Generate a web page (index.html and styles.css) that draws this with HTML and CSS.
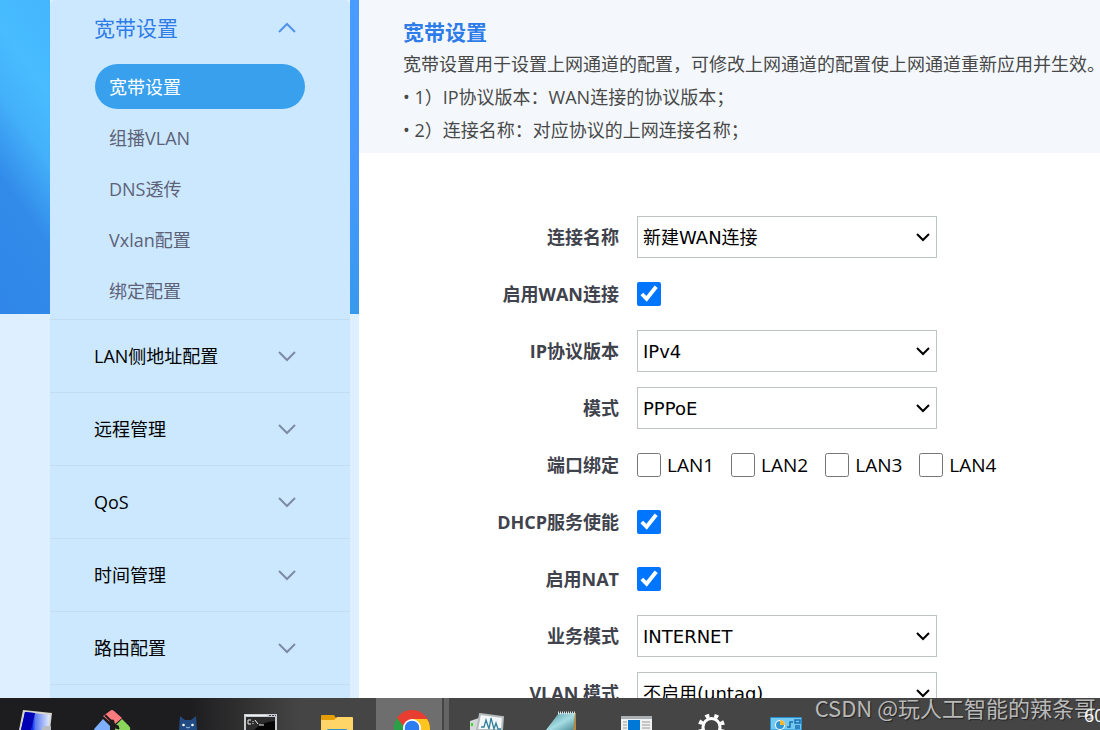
FILE: index.html
```html
<!DOCTYPE html>
<html lang="zh-CN">
<head>
<meta charset="utf-8">
<title>宽带设置</title>
<link rel="stylesheet" href="styles.css">
</head>
<body>
<svg class="defs" aria-hidden="true">
  <symbol id="chevron" viewBox="0 0 20 12"><path d="M2 2l8 8 8-8" fill="none" stroke="currentColor" stroke-width="2"/></symbol>
  <symbol id="arrow" viewBox="0 0 16 10"><path d="M2 2l6 6 6-6" fill="none" stroke="currentColor" stroke-width="2"/></symbol>
</svg>
<div class="page">
  <aside class="side">
    <nav class="menu">
      <section class="group open">
        <button class="group-title" type="button">宽带设置<svg class="chevron up"><use href="#chevron"/></svg></button>
        <ul class="submenu">
          <li><a class="current" href="#">宽带设置</a></li>
          <li><a href="#">组播VLAN</a></li>
          <li><a href="#">DNS透传</a></li>
          <li><a href="#">Vxlan配置</a></li>
          <li><a href="#">绑定配置</a></li>
        </ul>
      </section>
      <section class="group"><button class="group-title" type="button">LAN侧地址配置<svg class="chevron"><use href="#chevron"/></svg></button></section>
      <section class="group"><button class="group-title" type="button">远程管理<svg class="chevron"><use href="#chevron"/></svg></button></section>
      <section class="group"><button class="group-title" type="button">QoS<svg class="chevron"><use href="#chevron"/></svg></button></section>
      <section class="group"><button class="group-title" type="button">时间管理<svg class="chevron"><use href="#chevron"/></svg></button></section>
      <section class="group"><button class="group-title" type="button">路由配置<svg class="chevron"><use href="#chevron"/></svg></button></section>
      <section class="group"></section>
    </nav>
  </aside>
  <main class="content">
    <header class="intro">
      <h1>宽带设置</h1>
      <p>宽带设置用于设置上网通道的配置，可修改上网通道的配置使上网通道重新应用并生效。</p>
      <p>• 1）IP协议版本：WAN连接的协议版本；</p>
      <p>• 2）连接名称：对应协议的上网连接名称；</p>
    </header>
    <form class="form">
      <div class="row"><label for="name">连接名称</label><div class="select"><select id="name"><option>新建WAN连接</option></select><svg class="arrow"><use href="#arrow"/></svg></div></div>
      <div class="row"><label for="wan">启用WAN连接</label><input id="wan" type="checkbox" checked></div>
      <div class="row"><label for="ip">IP协议版本</label><div class="select"><select id="ip"><option>IPv4</option></select><svg class="arrow"><use href="#arrow"/></svg></div></div>
      <div class="row"><label for="mode">模式</label><div class="select"><select id="mode"><option>PPPoE</option></select><svg class="arrow"><use href="#arrow"/></svg></div></div>
      <div class="row"><span class="caption" id="ports">端口绑定</span>
        <div class="ports" role="group" aria-labelledby="ports">
          <label><input type="checkbox">LAN1</label>
          <label><input type="checkbox">LAN2</label>
          <label><input type="checkbox">LAN3</label>
          <label><input type="checkbox">LAN4</label>
        </div>
      </div>
      <div class="row"><label for="dhcp">DHCP服务使能</label><input id="dhcp" type="checkbox" checked></div>
      <div class="row"><label for="nat">启用NAT</label><input id="nat" type="checkbox" checked></div>
      <div class="row"><label for="service">业务模式</label><div class="select"><select id="service"><option>INTERNET</option></select><svg class="arrow"><use href="#arrow"/></svg></div></div>
      <div class="row"><label for="vlan">VLAN 模式</label><div class="select"><select id="vlan"><option>不启用(untag)</option></select><svg class="arrow"><use href="#arrow"/></svg></div></div>
    </form>
  </main>
</div>
<footer class="taskbar">
  <div class="apps">
    <svg viewBox="0 0 75 32">
      <defs><linearGradient id="scr" x1="0" x2="1"><stop offset="0" stop-color="#0010b0"/><stop offset=".4" stop-color="#1030f0"/><stop offset=".5" stop-color="#5d7cf0"/><stop offset="1" stop-color="#e4edff"/></linearGradient></defs>
      <path d="M24 12l29 3-2 17H20z" fill="#d6d6cc"/><path d="M26 14l25 3-2 15H22z" fill="url(#scr)"/><path d="M26 14l10 1-4 17H22z" fill="#0000b4"/><path d="M43 30l3-2h6v4h-9z" fill="#b9bcc0"/>
    </svg>
    <svg viewBox="0 0 75 32">
      <path d="M36 13q2-2 4 0l8 7-7 6-3-3-2 1-7-6z" fill="#ff7b7d"/><path d="M29 21l8 8v3H20q0-1 1-2z" fill="#7eb0ff"/><path d="M48 21l7 7q2 2 1 4H41l1-5z" fill="#8bd75c"/><path d="M31 17l6 6v9M38 24l7 7" fill="none" stroke="#201c1c" stroke-width="2"/><circle cx="38" cy="24" r="2.500" fill="#201c1c"/><circle cx="43" cy="29" r="2" fill="#201c1c"/>
    </svg>
    <svg viewBox="0 0 75 32">
      <path d="M31 18l5 4h6l5-4 1 14H30z" fill="#214b82"/><circle cx="34.500" cy="27" r="1.300" fill="#fff"/><circle cx="43.500" cy="27" r="1.300" fill="#fff"/><path d="M37 29l2 1 2-1" fill="none" stroke="#9ec5ee"/>
    </svg>
    <svg viewBox="0 0 75 32">
      <path d="M20 16h33v16H20z" fill="#c8ccd0"/><path d="M21 17h22v1H21z" fill="#f0f3f6"/><path d="M45 17h2v1h-2zm3 0h2v1h-2zm3 0h1v1h-1z" fill="#445"/><path d="M22 19h29v13H22z" fill="#050505"/><path d="M22 19h29v4q-14 1-21 9h-8z" fill="#2c2c2c"/><path d="M27 22h-3v4h3m2-3v1m0 1v1m2-4l3 4m1 1h5" fill="none" stroke="#eee"/>
    </svg>
    <svg viewBox="0 0 75 32">
      <path d="M22 18q0-1 1-1h12l2 3v4H22z" fill="#e59f05"/><path d="M22 22h13l3-3h15q1 0 1 1v12H22z" fill="#ffd567"/><path d="M28 32q0-1 1-1h18q1 0 1 1v2H28z" fill="#3e93c5"/>
    </svg>
    <svg viewBox="0 0 75 32">
      <path d="M2 0h66v32H2z" fill="#6e6e6e"/><path d="M68 0h2v32h-2z" fill="#454545"/><path d="M70 0h5v32h-5z" fill="#646464"/>
      <circle cx="38" cy="30" r="18" fill="#e83d31"/><path d="M23 20a18 18 0 0 0-3 12h17l-6-2z" fill="#28a149"/><path d="M38 21h15a18 18 0 0 1 3 11H38z" fill="#fdc51d"/><circle cx="38" cy="30" r="9" fill="#fff"/><circle cx="38" cy="30" r="7.300" fill="#2c7cf4"/>
    </svg>
    <svg viewBox="0 0 75 32">
      <path d="M21 23l9-3v12h-9z" fill="#d5d8da"/><path d="M22 25h2v3h-2z" fill="#41d622"/><path d="M31 16l23 3-1 13H28z" fill="#f4f7f7" stroke="#b4babc" stroke-width="2"/><path d="M32 29h3l2-7 3 9 2-11 3 11 2-6 2 6h3" fill="none" stroke="#32819c" stroke-width="1.300"/>
    </svg>
    <svg viewBox="0 0 75 32">
      <defs><linearGradient id="note" x1="0" y1="0" x2="1" y2="1"><stop offset="0" stop-color="#46919f"/><stop offset=".55" stop-color="#a6dce3"/><stop offset="1" stop-color="#4a8d99"/></linearGradient></defs>
      <path d="M36 15h16v17H22z" fill="#b18a45"/><path d="M35 15h16l-2 17H22z" fill="url(#note)"/><path d="M34 15h18" stroke="#dae2e2" stroke-width="3" stroke-dasharray="1 1"/>
    </svg>
    <svg viewBox="0 0 75 32">
      <path d="M22 18h31v14H22z" fill="#f1f1f1"/><path d="M22 18h31v3H22z" fill="#aab0b4"/><path d="M29 22h12v10H29z" fill="#0078d7"/><path d="M24 24h4m-4 3h4m-4 3h4m15-6h8m-8 3h8m-8 3h8" stroke="#9a9a9a"/>
    </svg>
    <svg viewBox="0 0 75 32">
      <circle cx="37.500" cy="29" r="8.500" fill="none" stroke="#fff" stroke-width="3"/><circle cx="37.500" cy="29" r="11.500" fill="none" stroke="#fff" stroke-width="4" stroke-dasharray="4 5.030" stroke-dashoffset="-2.500"/>
    </svg>
    <svg viewBox="0 0 75 32">
      <path d="M21.500 19.500h31V32h-31z" fill="#74c9f3" stroke="#278fcb"/><circle cx="31" cy="27" r="5" fill="#fff"/><circle cx="31" cy="27" r="4" fill="#3295d1"/><path d="M31 22a5 5 0 0 1 5 5h-5z" fill="#f6b733"/><path d="M38 29h3v-5h3m2-2h5v3h-5zm0 6h5m-5 2h5" fill="none" stroke="#1c6daf" stroke-width="1.500"/>
    </svg>
  </div>
  <span class="watermark">CSDN @玩人工智能的辣条哥</span>
  <span class="clock">60</span>
</footer>
</body>
</html>
```

FILE: styles.css
```css
* { box-sizing: border-box; }
body {
  margin: 0;
  height: 100vh;
  display: flex;
  flex-direction: column;
  overflow: hidden;
  font: 18px/33px "Open Sans", "Noto Sans CJK SC", sans-serif;
  color: #000;
  background: #fff;
}
h1, p, ul { margin: 0; padding: 0; }
.defs { position: absolute; width: 0; height: 0; }
.page { flex: 1; min-height: 0; display: flex; overflow: hidden; }

.side {
  flex: none;
  width: 359px;
  padding: 0 9px 0 50px;
  background:
    linear-gradient(#4a9bff, #4898ff 50%, #3799ec) right top / 9px 314px no-repeat,
    linear-gradient(235deg, #44b6fd 0%, #48bcff 25%, #44b1fa 42%, #328be9 64%, #2f86e8 100%) left top / 50px 314px no-repeat,
    #def0ff;
}
.menu { min-height: 100%; background: #cce8ff; border-radius: 6px 6px 0 0; }
.group { border-top: 1px solid #c3dcef; }
.group.open { border-top: 0; padding-bottom: 6px; }
.group-title {
  display: flex;
  align-items: center;
  justify-content: space-between;
  width: 100%;
  height: 72px;
  padding: 0 53px 0 44px;
  border: 0;
  background: none;
  font: inherit;
  color: #000;
  text-align: left;
}
.open .group-title { height: 56px; margin-bottom: 8px; font-size: 21px; color: #2e7ce8; }
.chevron { width: 20px; height: 12px; color: #7d8ba3; }
.chevron.up { transform: rotate(180deg); color: #5293ec; }
.submenu { list-style: none; display: grid; gap: 6px; padding: 0 45px; }
.submenu a {
  display: block;
  height: 45px;
  padding: 0 14px;
  border-radius: 23px;
  line-height: 47px;
  color: #5d6277;
  text-decoration: none;
}
.submenu .current { background: #39a0ee; color: #fff; }

.content { flex: 1; min-width: 0; }
.intro { padding: 16px 0 6px 44px; background: #f4f8fd; color: #484848; white-space: nowrap; }
.intro h1 { font-size: 21px; line-height: 32px; color: #2e7ce8; }
.form { display: grid; gap: 15px; padding-top: 63px; }
.row { display: grid; grid-template-columns: 260px 1fr; column-gap: 18px; align-items: center; height: 42px; }
.row > label, .caption { text-align: right; font-weight: 700; color: #40424c; }
input[type="checkbox"] { width: 24px; height: 24px; margin: 0; }
.select { display: grid; width: 300px; align-items: center; }
.select > * { grid-area: 1 / 1; }
.select select {
  width: 100%;
  height: 42px;
  padding: 0 5px;
  appearance: none;
  border: 1px solid #bdc3c3;
  border-radius: 0;
  background: #fff;
  font: 18px "DejaVu Sans", "Noto Sans CJK SC", sans-serif;
  color: #000;
}
.arrow { width: 16px; height: 10px; justify-self: end; margin-right: 6px; pointer-events: none; }
.ports { display: flex; gap: 17px; font-size: 19px; }
.ports label { display: flex; align-items: center; gap: 6px; }

.taskbar {
  position: relative;
  flex: none;
  height: 32px;
  overflow: hidden;
  background: linear-gradient(90deg, #1d1d1f 190px, #454545 300px);
}
.apps { display: flex; margin-left: -1px; }
.apps svg { flex: none; width: 75px; height: 32px; }
.watermark {
  position: absolute;
  right: 4px;
  top: -7px;
  font: 22px/32px "Noto Sans CJK SC", sans-serif;
  color: #b9b9b9;
  white-space: nowrap;
  text-shadow: 1px 1px 1px #222;
}
.clock { position: absolute; left: 1084px; top: 1px; color: #fff; }
```
